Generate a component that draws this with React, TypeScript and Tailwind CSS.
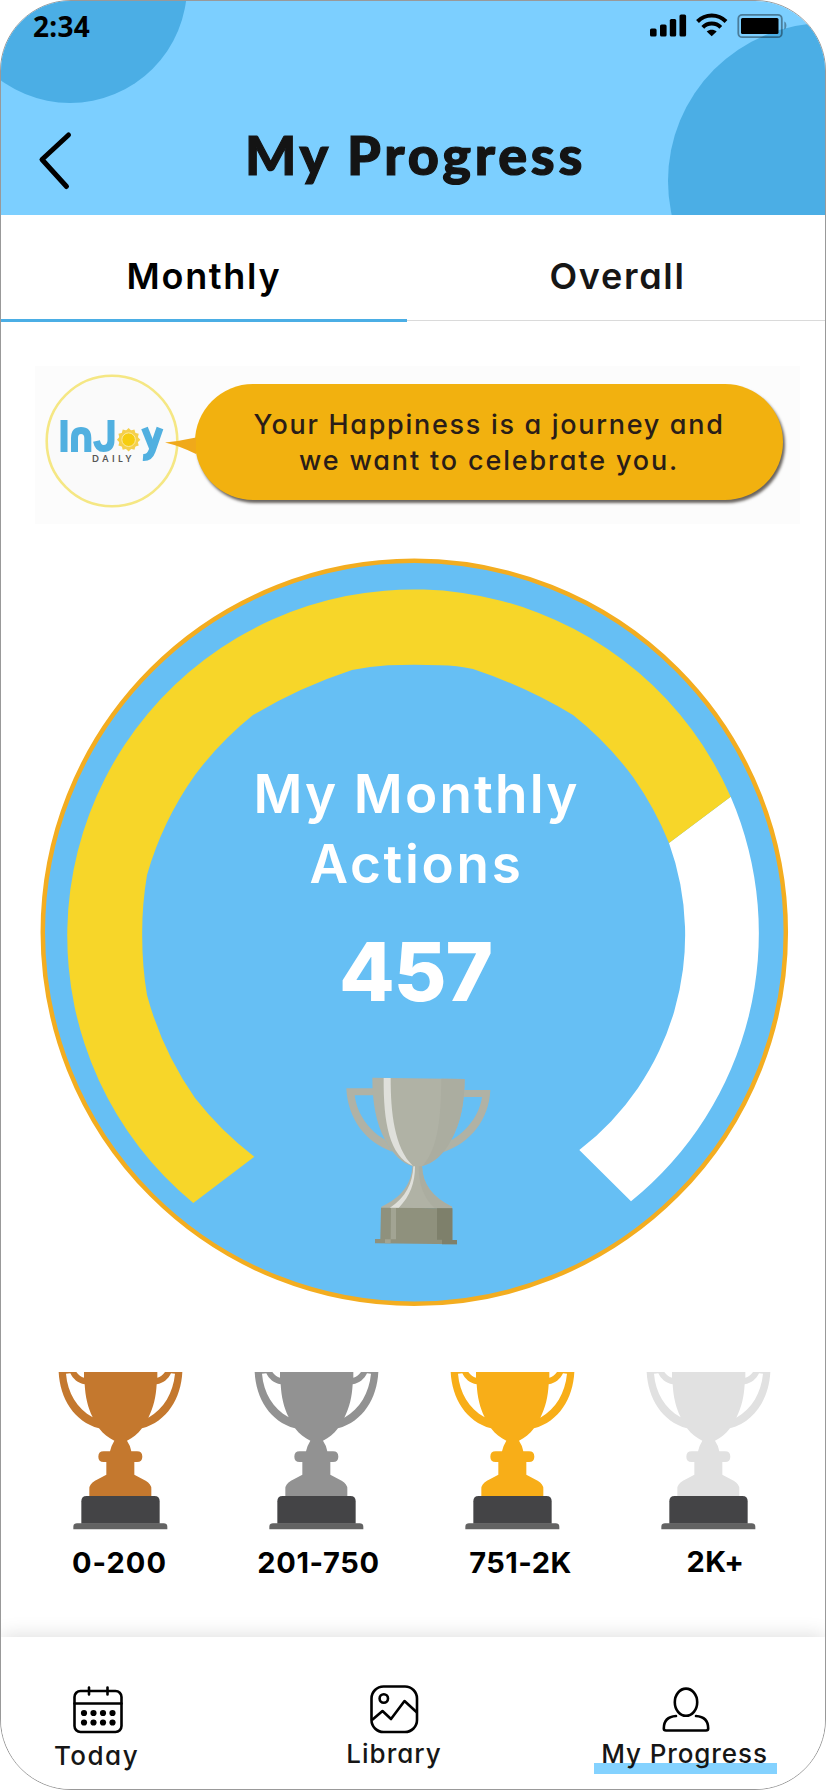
import { useState } from 'react'

const levels = [
  { label: '0-200', cup: '#c4782e', labelClass: 'tracking-[1px] -left-px' },
  { label: '201-750', cup: '#929292', labelClass: 'tracking-[0.7px] left-[2px]' },
  { label: '751-2K', cup: '#f8ae18', labelClass: 'tracking-[0.5px] left-[8px]' },
  { label: '2K+', cup: '#e1e1e1', labelClass: 'tracking-[0.5px] left-[7px] -top-px' },
]

function StatusIcons() {
  return (
    <svg className="w-[138px] h-[26px]" viewBox="648 13 138 26" fill="none">
      <rect x="649" y="28.5" width="6.6" height="8" rx="1.6" fill="#000" />
      <rect x="659" y="24.5" width="6.6" height="12" rx="1.6" fill="#000" />
      <rect x="668.8" y="19" width="6.4" height="17.5" rx="1.6" fill="#000" />
      <rect x="678.5" y="14.5" width="6.6" height="22" rx="1.6" fill="#000" />
      <path d="M696.5 21.5c8-8 20.500-8 28.500 0" stroke="#000" strokeWidth="4" />
      <path d="M701.800 27.300c5-5 13-5 18 0" stroke="#000" strokeWidth="4" />
      <path d="M705.700 31.600c3-2.500 7-2.500 10 0l-5 4.600z" fill="#000" />
      <rect x="737.300" y="14.800" width="43.500" height="22.400" rx="4" stroke="#000" strokeOpacity=".4" strokeWidth="1.800" />
      <rect x="740" y="18" width="37.500" height="16" rx="1.500" fill="#000" />
      <path d="M783.300 21.500c2.800 1 2.800 7 0 8z" fill="#000" fillOpacity=".35" />
    </svg>
  )
}

function SilverTrophy() {
  return (
    <svg className="w-[145px] h-[170px]" viewBox="75 50 435 510">
      <path fill="#b0b2a5" fillRule="evenodd" d="M76 87H158V108H101C108 165 145 215 192 241L214 277C135 250 80 180 76 87Z" />
      <path fill="#b0b2a5" fillRule="evenodd" d="M508 92H426V113H483C476 165 440 214 390 243L366 279C450 250 504 180 508 92Z" />
      <path fill="#b0b2a5" d="M154 55L431 59C430 130 420 190 390 243C370 285 335 312 303 321C305 375 335 415 393 442V447H181V442C240 415 272 375 274 320C245 312 215 285 192 241C165 190 154 130 154 55Z" />
      <path fill="#abada0" d="M361 58L431 59C430 130 420 190 390 243C370 285 335 312 303 321C345 275 360 200 361 58Z" />
      <path fill="#abada0" d="M293 321H303C305 375 335 415 393 442V447H342C305 415 293 370 293 321Z" />
      <path fill="#dfe0db" d="M188 56H209C209 160 220 265 276 320C205 290 187 190 188 56Z" />
      <path fill="#dfe0db" d="M277 321H282C282 370 268 410 233 446H206C255 415 275 370 277 321Z" />
      <path fill="#8f917d" d="M180 445L394 447V542H408V555L162 552V539H178Z" />
      <path fill="#a2a493" d="M210 446H225V540H209V552H192V540H209Z" />
      <path fill="#7e806b" d="M348 447H394V542H408V555H363V541H348Z" />
    </svg>
  )
}

function LevelTrophy({ color }: { color: string }) {
  return (
    <svg className="w-[127px] h-[160px] shrink-0" viewBox="80 60 381 480">
      <path
        fill={color}
        fillRule="evenodd"
        d="M85 66H138Q148 80 161 83V66H381V83Q394 80 404 66H456C452 145 410 215 335 235C322 252 308 264 290 272Q301 288 303 304H320Q336 304 336 320Q336 336 320 336H312V374L346 392Q363 402 363 416V438H177V416Q177 402 194 392L228 374V336H220Q204 336 204 320Q204 304 220 304H239Q243 286 252 272C234 264 219 252 206 235C131 215 89 145 85 66ZM107 71C112 130 140 175 187 202C172 172 165 140 163 103C142 99 128 87 120 70ZM434 71L422 70C414 87 400 99 379 103C377 140 370 172 354 203C401 175 428 130 434 71Z"
      />
      <path fill="#444446" d="M153 521V454Q153 438 169 438H372Q388 438 388 454V521Z" />
      <path fill="#636363" d="M129 538V530Q129 520 140 520H400Q411 520 411 530V538Z" />
    </svg>
  )
}

function Gauge() {
  return (
    <svg className="absolute inset-0 w-full h-full" viewBox="40 558 749 749">
      <circle cx="414.300" cy="932.300" r="371.500" fill="#66bff4" stroke="#f3ad20" strokeWidth="4.500" />
      <path fill="#fff" d="M730.700 796.700A345 345 0 0 1 631 1201.300L579.300 1150A271 271 0 0 0 669 843Z" />
      <path
        fill="#f7d629"
        d="M193.300 1203A346.300 346.300 0 1 1 730.700 796.700L669 843A330 330 0 0 0 633 777A330 330 0 0 0 573 715A500 500 0 0 0 473 669Q457 665.500 440 665.300Q414 664 388 665.300Q370 666.500 352 670A500 500 0 0 0 253 715A330 330 0 0 0 195 775A330 330 0 0 0 147 875Q142 905 142.200 934Q142 965 147 995A330 330 0 0 0 195 1098A330 330 0 0 0 254.300 1156.700Z"
      />
    </svg>
  )
}

function Logo() {
  const rays = Array.from({ length: 12 }, (_, i) => i * 30)
  return (
    <svg className="absolute left-0 top-0 w-[165px] h-[158px]" viewBox="35 366 165 158" fill="none">
      <circle cx="112" cy="441" r="65.300" fill="#fafafa" stroke="#f5e784" strokeWidth="2.600" />
      <g stroke="#51b0e0" strokeWidth="7">
        <path d="M64 420V452" />
        <path d="M74.500 452V438Q74.500 430.500 81 430.500Q87.800 430.500 87.800 438V452" />
        <path d="M111 420V440Q111 448.500 103.500 448.500Q98 448.500 96.500 441" />
        <path d="M144.500 428L152.500 448" />
        <path d="M160 428L152 451Q149.500 458 143 457.500" />
      </g>
      <g fill="#f5d04c">
        {rays.map(r => (
          <path key={r} d="M125 431.500L128.600 428L132.200 431.500Z" transform={`rotate(${r} 128.600 439.700)`} />
        ))}
        <circle cx="128.600" cy="439.700" r="9.300" />
      </g>
      <circle cx="128.600" cy="439.700" r="6.800" fill="#f6cd10" stroke="#fbeaa0" strokeWidth="1" />
      <text x="92" y="461.500" fontSize="9" fontFamily="Lato, sans-serif" fontWeight="700" letterSpacing="3.500" fill="#555">DAILY</text>
      <path d="M165 442.500Q180 441 196 437.500V454Q180 446 165 442.500Z" fill="#f0a91a" />
    </svg>
  )
}

function CalendarIcon() {
  return (
    <svg className="w-[50px] h-[48px]" viewBox="0 0 50 48" fill="none" stroke="#000" strokeWidth="2.600" strokeLinecap="round">
      <rect x="1.500" y="5" width="47" height="41" rx="6" />
      <path d="M1.500 17.500H48.500M16 1.500V8.500M34.500 1.500V8.500" />
      {[11, 20.5, 30, 39.5].map(x => (
        <g key={x} fill="#000" stroke="none">
          <circle cx={x} cy="27" r="3.100" />
          <circle cx={x} cy="36.500" r="3.100" />
        </g>
      ))}
    </svg>
  )
}

function PictureIcon() {
  return (
    <svg className="w-[49px] h-[49px]" viewBox="0 0 49 49" fill="none" stroke="#000" strokeWidth="2.600" strokeLinejoin="round">
      <rect x="1.500" y="1.500" width="45.500" height="45.500" rx="12" />
      <circle cx="13.800" cy="13.500" r="4.200" />
      <path d="M2 35L12.500 26L21 34L34.500 16L47 27.500" />
    </svg>
  )
}

function PersonIcon() {
  return (
    <svg className="w-[48px] h-[46px]" viewBox="0 0 48 46" fill="none" stroke="#000" strokeWidth="2.600" strokeLinecap="round" strokeLinejoin="round">
      <ellipse cx="24" cy="15.200" rx="11.200" ry="13.600" />
      <path d="M14 29C6 29.500 1.800 34 1.800 41.500Q1.800 43.500 4 43.500H44Q46.200 43.500 46.200 41.500C46.200 34 42 29.500 34 29" />
    </svg>
  )
}

export default function App() {
  const [tab, setTab] = useState('monthly')

  return (
    <div className="w-[826px] h-[1790px] flex flex-col bg-white border border-[#999] rounded-[71px] overflow-hidden font-['Inter','Liberation_Sans',sans-serif] [font-feature-settings:'cv11'] text-black">
      <header className="relative h-[214px] flex-none bg-[#7ccfff] overflow-hidden">
        <div className="absolute w-[234px] h-[234px] rounded-full bg-[#4baee5] -left-[48px] -top-[132px]" />
        <div className="absolute w-[316px] h-[316px] rounded-full bg-[#4baee5] left-[667px] top-[22px]" />
        <div className="relative flex justify-between pl-[32px] pr-[38px] pt-[12px]">
          <span className="-mt-[2px] font-['Noto_Sans',sans-serif] font-bold text-[28px] leading-[30px] tracking-[0.3px]">2:34</span>
          <StatusIcons />
        </div>
        <div className="relative flex items-center mt-[90px] pl-[37px]">
          <button>
            <svg className="w-[35px] h-[60px]" viewBox="0 0 35 60" fill="none" stroke="#000" strokeWidth="5" strokeLinecap="round" strokeLinejoin="round">
              <path d="M30.500 4L4 28.500L28.500 55.500" />
            </svg>
          </button>
          <h1 className="ml-[172px] -mt-[12px] font-['Lato',sans-serif] font-black text-[54px] leading-[60px] tracking-[3.7px] text-[#141414] [-webkit-text-stroke:1.2px_#141414] whitespace-nowrap">My Progress</h1>
        </div>
      </header>

      <div className="flex items-start h-[107px] flex-none font-semibold text-[36px] leading-[40px]">
        <button onClick={() => setTab('monthly')}
          className={`w-[406px] pt-[17px] tracking-[1.7px] ${tab === 'monthly' ? 'h-[107px] border-b-[3px] border-[#4baee5]' : 'h-[106px] border-b border-[#dadada]'}`}>
          Monthly
        </button>
        <button onClick={() => setTab('overall')}
          className={`flex-1 pl-[3px] pt-[16px] tracking-[1.7px] text-[#161616] ${tab === 'overall' ? 'h-[107px] border-b-[3px] border-[#4baee5]' : 'h-[106px] border-b border-[#dadada]'}`}>
          Overall
        </button>
      </div>

      <section className="relative ml-[34px] mt-[44px] w-[765px] h-[158px] flex-none bg-[#fcfcfc] pl-[160px] pt-[17.500px]">
        <div className="w-[588px] h-[116px] pt-[2px] rounded-full bg-[#f2b10f] shadow-[2px_3px_3px_#69645f] flex flex-col justify-center text-center font-medium text-[27px] leading-[36px] text-[#2a1d18] whitespace-nowrap">
          <p className="tracking-[1.7px]">Your Happiness is a journey and</p>
          <p className="tracking-[1.85px]">we want to celebrate you.</p>
        </div>
        <Logo />
      </section>

      <section className="relative ml-[39px] mt-[34px] w-[749px] h-[749px] flex-none text-white text-center">
        <Gauge />
        <div className="relative flex flex-col items-center pt-[201px]">
          <h2 className="font-semibold text-[53px] leading-[70px] whitespace-nowrap">
            <span className="block pl-[4px] tracking-[2.2px]">My Monthly</span>
            <span className="block pl-[4px] tracking-[2.7px]">Actions</span>
          </h2>
          <p className="font-extrabold text-[81px] leading-[90px] mt-[28px] pl-[2px] tracking-[-1px]">457</p>
          <div className="mt-[59px] pl-[7px]">
            <SilverTrophy />
          </div>
        </div>
      </section>

      <section className="flex flex-none mt-[63px] pl-[21.500px]">
        {levels.map(l => (
          <div key={l.label} className="w-[196px] flex flex-col items-center">
            <LevelTrophy color={l.cup} />
            <span className={`relative mt-[15px] font-bold text-[29px] leading-[36px] whitespace-nowrap ${l.labelClass}`}>{l.label}</span>
          </div>
        ))}
      </section>

      <nav className="relative mt-auto h-[152px] flex-none bg-white shadow-[0_-2px_18px_rgba(0,0,0,0.13)] flex items-start font-medium text-[26px] leading-[30px] text-[#161616] whitespace-nowrap">
        <a className="ml-[54px] mt-[49px] w-[86px] flex flex-col items-center">
          <CalendarIcon />
          <span className="mt-[7px] -ml-[3px] tracking-[1.500px]">Today</span>
        </a>
        <a className="ml-[203px] mt-[48px] w-[100px] flex flex-col items-center">
          <PictureIcon />
          <span className="mt-[5px] tracking-[1px]">Library</span>
        </a>
        <a className="ml-[150px] mt-[50px] w-[183px] flex flex-col items-center">
          <PersonIcon />
          <span className="mt-[6px] w-full pr-[2px] text-center tracking-[0.9px] bg-[linear-gradient(#84d2ff,#84d2ff)] bg-no-repeat bg-[length:183px_11px] bg-[position:0_24px] pb-[6px]">My Progress</span>
        </a>
      </nav>
    </div>
  )
}
